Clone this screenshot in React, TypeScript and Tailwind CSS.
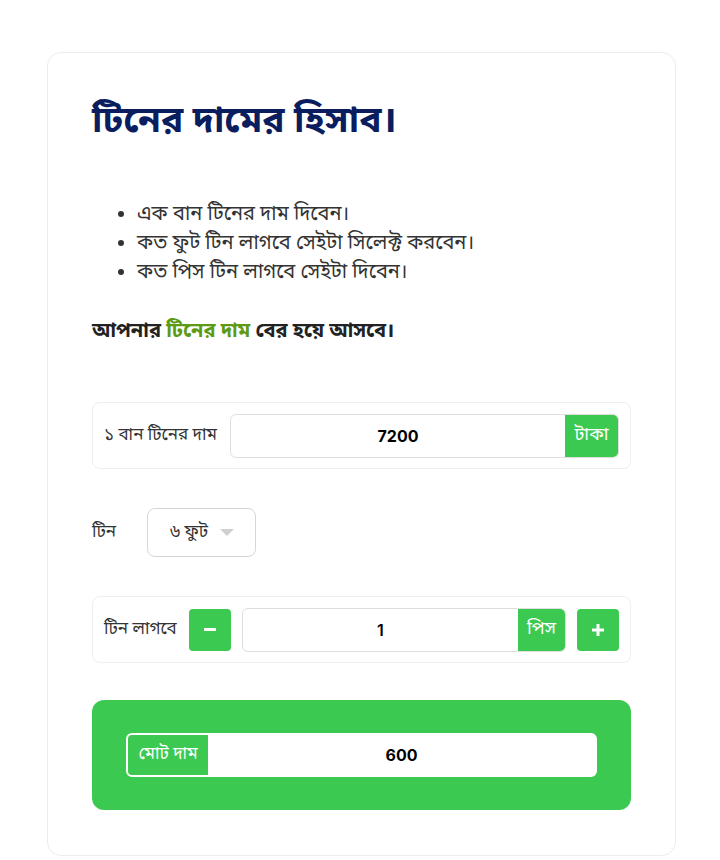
import React from "react";

const bn = { fontFamily: '"Noto Sans Bengali", "Noto Sans", "Lohit Bengali", "FreeSans", sans-serif' };

export default function App() {
  return (
    <div className="min-h-[860px] bg-white pt-[52px]" style={bn}>
      <div className="ml-[47px] w-[629px] h-[804px] rounded-[14px] border border-[#ececec] px-[44px] pt-[45px]">
        <h1 className="text-[37px] font-bold text-[#0a1d5e] leading-[50px]">টিনের দামের হিসাব।</h1>
        <ul className="mt-[53px] list-disc pl-[45px] text-[20px] leading-[29px] text-[#333]">
          <li>এক বান টিনের দাম দিবেন।</li>
          <li>কত ফুট টিন লাগবে সেইটা সিলেক্ট করবেন।</li>
          <li>কত পিস টিন লাগবে সেইটা দিবেন।</li>
        </ul>
        <p className="mt-[30px] text-[20px] font-bold text-[#222] leading-[29px]">
          আপনার <span className="text-[#5f9a14]">টিনের দাম</span> বের হয়ে আসবে।
        </p>

        <div className="mt-[55px] flex h-[67px] items-center rounded-[8px] border border-[#efefef] px-[11px]">
          <span className="w-[126px] text-[17px] text-[#333]">১ বান টিনের দাম</span>
          <div className="flex h-[44px] flex-1 overflow-hidden rounded-[6px] border border-[#dedede]">
            <div className="flex flex-1 items-center justify-center text-[16px] font-bold text-black" style={{ fontFamily: '"Inter", sans-serif' }}>7200</div>
            <div className="flex w-[53px] items-center justify-center bg-[#3cc952] text-[18px] text-white">টাকা</div>
          </div>
        </div>

        <div className="mt-[39px] flex items-center">
          <span className="w-[55px] text-[17px] text-[#333]">টিন</span>
          <div className="flex h-[49px] w-[109px] items-center rounded-[8px] border border-[#d6d6d6] pl-[22px]">
            <span className="text-[17px] text-[#333]">৬ ফুট</span>
            <svg className="ml-[12px]" width="14" height="8" viewBox="0 0 14 8"><path d="M0 0 L14 0 L7 7 Z" fill="#cfcfcf" /></svg>
          </div>
        </div>

        <div className="mt-[39px] flex h-[67px] items-center rounded-[8px] border border-[#efefef] px-[11px]">
          <span className="w-[85px] text-[17px] text-[#333]">টিন লাগবে</span>
          <button className="flex h-[42px] w-[42px] items-center justify-center rounded-[4px] bg-[#3cc952]">
            <span className="block h-[3px] w-[12px] bg-white" />
          </button>
          <div className="ml-[11px] flex h-[44px] flex-1 overflow-hidden rounded-[6px] border border-[#dedede]">
            <div className="flex flex-1 items-center justify-center text-[16px] font-semibold text-black" style={{ fontFamily: '"Inter", sans-serif' }}>1</div>
            <div className="flex w-[47px] items-center justify-center bg-[#3cc952] text-[18px] text-white">পিস</div>
          </div>
          <button className="ml-[11px] flex h-[42px] w-[42px] items-center justify-center rounded-[4px] bg-[#3cc952]">
            <svg width="12" height="12" viewBox="0 0 12 12"><path d="M6 0v12M0 6h12" stroke="white" strokeWidth="3" /></svg>
          </button>
        </div>

        <div className="mt-[37px] flex h-[110px] items-center rounded-[12px] bg-[#3cc952] px-[34px]">
          <div className="flex h-[44px] flex-1 overflow-hidden rounded-[6px] border-2 border-white bg-white">
            <div className="flex w-[80px] items-center justify-center bg-[#3cc952] text-[17px] text-white">মোট দাম</div>
            <div className="flex flex-1 items-center justify-center text-[16px] font-bold text-black" style={{ fontFamily: '"Inter", sans-serif' }}>600</div>
          </div>
        </div>
      </div>
    </div>
  );
}
